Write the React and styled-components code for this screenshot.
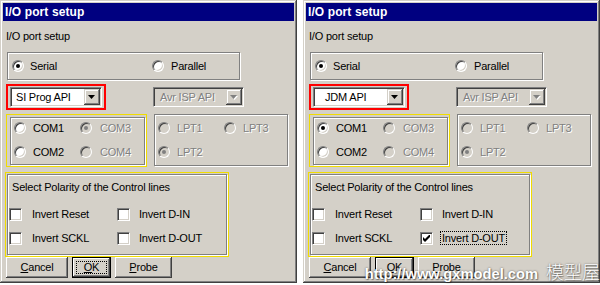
import React from "react";
import styled, { createGlobalStyle } from "styled-components";

const Global = createGlobalStyle`
  body {
    margin: 0;
    background: #fff;
    font-family: "Liberation Sans", Arial, sans-serif;
    font-size: 11px;
    letter-spacing: -0.2px;
  }
  * { box-sizing: border-box; }
`;

const Page = styled.div`
  position: relative;
  width: 600px;
  height: 285px;
  display: flex;
  gap: 6px;
  background: #fff;
`;

const Win = styled.div`
  width: 297px;
  height: 283px;
  padding: 3px;
  background: #d4d0c8;
  box-shadow: inset -1px -1px #404040, inset 1px 1px #d4d0c8,
    inset -2px -2px #808080, inset 2px 2px #fff;
  display: flex;
  flex-direction: column;
`;

const TitleBar = styled.div`
  height: 18px;
  background: #000080;
  color: #fff;
  font-weight: bold;
  font-size: 12px;
  letter-spacing: 0.1px;
  padding-left: 2px;
  display: flex;
  align-items: center;
`;

const Caption = styled.div`
  margin: 8px 0 0 3px;
  height: 14px;
  line-height: 14px;
`;

const Etched = styled.div`
  border: 1px solid #808080;
  box-shadow: inset 1px 1px #fff, 1px 1px #fff;
`;

const SerialGroup = styled(Etched)`
  margin: 9px 0 0 4px;
  width: 233px;
  height: 28px;
  padding-left: 4px;
  display: grid;
  grid-template-columns: 140px 1fr;
  align-items: center;
`;

const Option = styled.div`
  display: flex;
  align-items: center;
  gap: ${(p) => p.$gap || 6}px;
  height: 16px;
  white-space: nowrap;
  color: ${(p) => (p.$disabled ? "#808080" : "#000")};
  text-shadow: ${(p) => (p.$disabled ? "1px 1px #fff" : "none")};
`;

const Radio = styled.span`
  position: relative;
  flex: none;
  width: 12px;
  height: 12px;
  border-radius: 50%;
  background: ${(p) => (p.$disabled ? "#d4d0c8" : "#fff")};
  border: 1px solid;
  border-color: #808080 #fff #fff #808080;
  box-shadow: inset 1px 1px #404040, inset -1px -1px #d4d0c8;
  &::after {
    content: "";
    display: ${(p) => (p.$checked ? "block" : "none")};
    position: absolute;
    left: 3px;
    top: 3px;
    width: 4px;
    height: 4px;
    border-radius: 50%;
    background: ${(p) => (p.$disabled ? "#808080" : "#000")};
  }
`;

const Row = styled.div`
  display: flex;
  align-items: ${(p) => p.$align || "flex-start"};
  margin-top: ${(p) => p.$top || 0}px;
  height: ${(p) => p.$h}px;
`;

const Mark = styled.div`
  border: ${(p) => p.$w || 1}px solid ${(p) => p.$color};
  margin-left: ${(p) => p.$left || 0}px;
  width: ${(p) => p.$width}px;
  height: ${(p) => p.$height}px;
  padding: ${(p) => p.$pad || "0"};
  display: flex;
`;

const Combo = styled.div`
  margin-left: ${(p) => p.$left || 0}px;
  width: ${(p) => p.$width}px;
  height: 20px;
  padding: 1px;
  display: flex;
  align-items: center;
  background: ${(p) => (p.$disabled ? "#d4d0c8" : "#fff")};
  border: 1px solid;
  border-color: #808080 #fff #fff #808080;
  box-shadow: inset 1px 1px #404040, inset -1px -1px #d4d0c8;
`;

const ComboText = styled.span`
  flex: 1;
  padding-left: ${(p) => p.$indent}px;
  color: ${(p) => (p.$disabled ? "#808080" : "#000")};
  text-shadow: ${(p) => (p.$disabled ? "1px 1px #fff" : "none")};
  white-space: nowrap;
`;

const DropButton = styled.span`
  width: 16px;
  height: 16px;
  flex: none;
  display: flex;
  align-items: center;
  justify-content: center;
  background: #d4d0c8;
  box-shadow: inset -1px -1px #404040, inset 1px 1px #d4d0c8,
    inset -2px -2px #808080, inset 2px 2px #fff;
`;

const Frame = styled(Etched)`
  margin-left: ${(p) => p.$left || 0}px;
  width: ${(p) => (p.$width ? p.$width + "px" : "100%")};
  height: ${(p) => (p.$height ? p.$height + "px" : "100%")};
  padding: ${(p) => p.$pad || "0"};
`;

const OptionGrid = styled.div`
  display: grid;
  grid-template-columns: ${(p) => p.$col}px auto;
  grid-auto-rows: 16px;
  row-gap: 8px;
  margin-top: ${(p) => p.$top || 0}px;
`;

const Heading = styled.div`
  margin-left: 3px;
  height: 14px;
  line-height: 14px;
  white-space: nowrap;
`;

const Check = styled.span`
  flex: none;
  width: 13px;
  height: 13px;
  display: flex;
  align-items: center;
  justify-content: center;
  background: #fff;
  border: 1px solid;
  border-color: #808080 #fff #fff #808080;
  box-shadow: inset 1px 1px #404040, inset -1px -1px #d4d0c8;
`;

const CheckLabel = styled.span`
  padding: 0 1px;
  margin-left: -1px;
  border: 1px ${(p) => (p.$focus ? "dotted #000" : "solid transparent")};
  line-height: 12px;
`;

const Buttons = styled.div`
  display: flex;
  gap: 4px;
  margin-left: 3px;
  height: 21px;
`;

const Button = styled.div`
  width: ${(p) => p.$width}px;
  height: 21px;
  padding: 4px;
  display: flex;
  background: #d4d0c8;
  box-shadow: ${(p) =>
    p.$default
      ? "inset 0 0 0 1px #000, inset -2px -2px #404040, inset 2px 2px #fff, inset -3px -3px #808080"
      : "inset -1px -1px #404040, inset 1px 1px #fff, inset -2px -2px #808080, inset 2px 2px #d4d0c8"};
`;

const ButtonLabel = styled.span`
  flex: 1;
  display: flex;
  align-items: center;
  justify-content: center;
  border: 1px ${(p) => (p.$focus ? "dotted #000" : "solid transparent")};
  line-height: 11px;
  u { text-decoration: underline; text-underline-offset: 1px; }
`;

const Watermark = styled.div`
  position: absolute;
  right: 0;
  bottom: 1px;
  display: flex;
  align-items: baseline;
  gap: 8px;
  color: #fff;
  text-shadow: 0 0 2px rgba(0, 0, 0, 0.55), 1px 1px 1px rgba(0, 0, 0, 0.35);
  letter-spacing: 0;
`;

const Url = styled.span`
  font-family: "Liberation Sans", Arial, sans-serif;
  font-weight: bold;
  font-size: 14.7px;
`;

const Brand = styled.span`
  font-family: "Noto Sans CJK SC", sans-serif;
  font-size: 18px;
  font-weight: 300;
`;

const Arrow = ({ disabled }) => (
  <svg width="8" height="5" viewBox="0 0 8 5">
    {disabled && <polygon points="1,1 8,1 4.5,5" fill="#fff" />}
    <polygon points="0,0 7,0 3.5,4" fill={disabled ? "#808080" : "#000"} />
  </svg>
);

const Tick = () => (
  <svg width="7" height="7" viewBox="0 0 7 7">
    <polygon points="0,2 2,4 7,-1 7,2 2,7 0,5" fill="#000" />
  </svg>
);

const Opt = ({ label, checked, disabled, gap }) => (
  <Option $disabled={disabled} $gap={gap}>
    <Radio $checked={checked} $disabled={disabled} />
    {label}
  </Option>
);

const Box = ({ label, checked, focus, gap }) => (
  <Option $gap={gap}>
    <Check>{checked && <Tick />}</Check>
    <CheckLabel $focus={focus}>{label}</CheckLabel>
  </Option>
);

function Dialog({ api, indent, com1, com3, dout, okFocus }) {
  return (
    <Win>
      <TitleBar>I/O port setup</TitleBar>
      <Caption>I/O port setup</Caption>
      <SerialGroup>
        <Opt label="Serial" checked />
        <Opt label="Parallel" gap={7} />
      </SerialGroup>

      <Row $top={4} $h={26} $align="center">
        <Mark $color="#ff0000" $w={2} $left={3} $width={100} $height={26} $pad="1px 2px">
          <Combo $width={92}>
            <ComboText $indent={indent}>{api}</ComboText>
            <DropButton>
              <Arrow />
            </DropButton>
          </Combo>
        </Mark>
        <Combo $width={91} $left={47} $disabled>
          <ComboText $indent={5} $disabled>
            Avr ISP API
          </ComboText>
          <DropButton>
            <Arrow disabled />
          </DropButton>
        </Combo>
      </Row>

      <Row $top={4} $h={53}>
        <Mark $color="#f0dc00" $left={3} $width={141} $height={53} $pad="2px 1px 1px 3px">
          <Frame $pad="2px 0 0 3px">
            <OptionGrid $col={66}>
              <Opt label="COM1" checked={com1} gap={7} />
              <Opt label="COM3" checked={com3} disabled gap={8} />
              <Opt label="COM2" gap={7} />
              <Opt label="COM4" disabled gap={8} />
            </OptionGrid>
          </Frame>
        </Mark>
        <Frame $left={7} $width={134} $height={52} $pad="5px 0 0 3px">
          <OptionGrid $col={66}>
            <Opt label="LPT1" disabled gap={7} />
            <Opt label="LPT3" disabled gap={7} />
            <Opt label="LPT2" checked disabled gap={7} />
          </OptionGrid>
        </Frame>
      </Row>

      <Row $top={5} $h={85}>
        <Mark $color="#f0dc00" $left={2} $width={224} $height={85} $pad="1px">
          <Frame $pad="5px 0 0 1px">
            <Heading>Select Polarity of the Control lines</Heading>
            <OptionGrid $col={108} $top={12}>
              <Box label="Invert Reset" gap={9} />
              <Box label="Invert D-IN" gap={8} />
              <Box label="Invert SCKL" gap={9} />
              <Box label="Invert D-OUT" gap={8} checked={dout} focus={dout} />
            </OptionGrid>
          </Frame>
        </Mark>
      </Row>

      <Buttons>
        <Button $width={62}>
          <ButtonLabel>
            <u>C</u>ancel
          </ButtonLabel>
        </Button>
        <Button $width={39} $default>
          <ButtonLabel $focus={okFocus}>
            <u>O</u>K
          </ButtonLabel>
        </Button>
        <Button $width={57}>
          <ButtonLabel>
            <u>P</u>robe
          </ButtonLabel>
        </Button>
      </Buttons>
    </Win>
  );
}

export default function App() {
  return (
    <Page>
      <Global />
      <Dialog api="SI Prog API" indent={4} com3 okFocus />
      <Dialog api="JDM API" indent={10} com1 dout />
      <Watermark>
        <Url>http://www.gxmodel.com</Url>
        <Brand>模型屋</Brand>
      </Watermark>
    </Page>
  );
}
